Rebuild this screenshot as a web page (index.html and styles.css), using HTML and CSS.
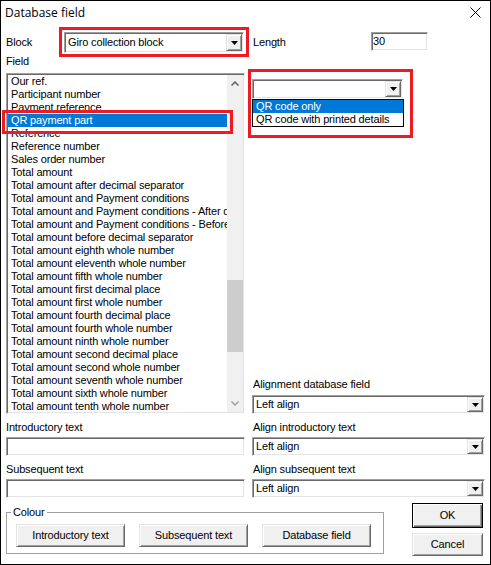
FILE: index.html
```html
<!DOCTYPE html>
<html lang="en">
<head>
    <meta charset="UTF-8">
    <title>Database field</title>
    <link rel="stylesheet" href="styles.css">
</head>
<body>
<div class="window">
    <div class="titlebar">
        <span class="title">Database field</span>
        <svg class="close" width="11" height="11" viewBox="0 0 11 11"><path d="M0.5 0.5 L10.5 10.5 M10.5 0.5 L0.5 10.5" stroke="#000" stroke-width="1"/></svg>
    </div>

    <div class="form">
        <div class="grid row-top">
            <div class="cell">
                <span class="lbl lbl-block">Block</span>
                <div class="combo combo-block">
                    <span class="combo-text">Giro collection block</span>
                    <span class="drop-btn"><svg width="7" height="4" viewBox="0 0 7 4"><path d="M0 0h7l-3.5 4z" fill="#000"/></svg></span>
                </div>
            </div>
            <div class="cell">
                <span class="lbl lbl-length">Length</span>
                <div class="textbox textbox-length">30</div>
            </div>
        </div>

        <div class="lbl field-lbl">Field</div>

        <div class="grid row-main">
            <div class="listbox">
                <ul class="items">
                    <li>Our ref.</li>
                    <li>Participant number</li>
                    <li>Payment reference</li>
                    <li class="sel">QR payment part</li>
                    <li>Reference</li>
                    <li>Reference number</li>
                    <li>Sales order number</li>
                    <li>Total amount</li>
                    <li>Total amount after decimal separator</li>
                    <li>Total amount and Payment conditions</li>
                    <li>Total amount and Payment conditions - After decimal separator</li>
                    <li>Total amount and Payment conditions - Before decimal separator</li>
                    <li>Total amount before decimal separator</li>
                    <li>Total amount eighth whole number</li>
                    <li>Total amount eleventh whole number</li>
                    <li>Total amount fifth whole number</li>
                    <li>Total amount first decimal place</li>
                    <li>Total amount first whole number</li>
                    <li>Total amount fourth decimal place</li>
                    <li>Total amount fourth whole number</li>
                    <li>Total amount ninth whole number</li>
                    <li>Total amount second decimal place</li>
                    <li>Total amount second whole number</li>
                    <li>Total amount seventh whole number</li>
                    <li>Total amount sixth whole number</li>
                    <li>Total amount tenth whole number</li>
                </ul>
                <div class="vscroll">
                    <span class="sb-btn"><svg width="8" height="5" viewBox="0 0 8 5"><path d="M0.5 4.5 L4 1 L7.5 4.5" fill="none" stroke="#606060" stroke-width="1.5"/></svg></span>
                    <span class="thumb"></span>
                    <span class="sb-btn sb-down"><svg width="8" height="5" viewBox="0 0 8 5"><path d="M0.5 0.5 L4 4 L7.5 0.5" fill="none" stroke="#a0a0a0" stroke-width="1.5"/></svg></span>
                </div>
            </div>

            <div class="side">
                <div class="qr">
                    <div class="combo combo-qr">
                        <span class="combo-text"></span>
                        <span class="drop-btn"><svg width="7" height="4" viewBox="0 0 7 4"><path d="M0 0h7l-3.5 4z" fill="#000"/></svg></span>
                    </div>
                    <ul class="droplist">
                        <li class="sel">QR code only</li>
                        <li>QR code with printed details</li>
                    </ul>
                </div>
                <div class="align-group">
                    <div class="lbl lbl-right">Alignment database field</div>
                    <div class="combo combo-wide">
                        <span class="combo-text">Left align</span>
                        <span class="drop-btn"><svg width="7" height="4" viewBox="0 0 7 4"><path d="M0 0h7l-3.5 4z" fill="#000"/></svg></span>
                    </div>
                </div>
            </div>
        </div>

        <div class="grid row-text">
            <div>
                <div class="lbl">Introductory text</div>
                <div class="textbox textbox-wide"></div>
            </div>
            <div>
                <div class="lbl lbl-right">Align introductory text</div>
                <div class="combo combo-wide">
                    <span class="combo-text">Left align</span>
                    <span class="drop-btn"><svg width="7" height="4" viewBox="0 0 7 4"><path d="M0 0h7l-3.5 4z" fill="#000"/></svg></span>
                </div>
            </div>
        </div>

        <div class="grid row-text">
            <div>
                <div class="lbl">Subsequent text</div>
                <div class="textbox textbox-wide"></div>
            </div>
            <div>
                <div class="lbl lbl-right">Align subsequent text</div>
                <div class="combo combo-wide">
                    <span class="combo-text">Left align</span>
                    <span class="drop-btn"><svg width="7" height="4" viewBox="0 0 7 4"><path d="M0 0h7l-3.5 4z" fill="#000"/></svg></span>
                </div>
            </div>
        </div>

        <div class="bottom">
            <fieldset class="colour">
                <legend>Colour</legend>
                <button class="btn btn-colour">Introductory text</button>
                <button class="btn btn-colour">Subsequent text</button>
                <button class="btn btn-colour">Database field</button>
            </fieldset>
            <div class="actions">
                <button class="btn btn-ok">OK</button>
                <button class="btn btn-cancel">Cancel</button>
            </div>
        </div>
    </div>

    <!-- red highlight marks drawn over the dialog -->
    <div class="mark mark-block"></div>
    <div class="mark mark-field"></div>
    <div class="mark mark-qr"></div>
</div>
</body>
</html>
```

FILE: styles.css
```css
* {
    box-sizing: border-box;
}
body {
    margin: 0;
    background: #fff;
    color: #000;
    font-family: "Liberation Sans", Arial, sans-serif;
    font-size: 11px;
    line-height: 13px;
    letter-spacing: -0.15px;
}
.window {
    position: relative;
    width: 491px;
    height: 565px;
    border: 1px solid #000;
    background: #fff;
    overflow: hidden;
}
.titlebar {
    height: 23px;
    display: flex;
    align-items: center;
    justify-content: space-between;
    padding: 0 9px 0 4px;
}
.title {
    font-family: "Open Sans", "Liberation Sans", sans-serif;
    font-size: 12px;
    letter-spacing: 0;
}
.close {
    display: block;
}
.form {
    padding: 0 5px;
}
.grid {
    display: grid;
    grid-template-columns: 239px 233px;
    column-gap: 7px;
}
.cell {
    display: flex;
    align-items: flex-start;
}
.lbl {
    white-space: nowrap;
}
.lbl-right {
    padding-left: 1px;
}
.row-top {
    margin-top: 8px;
}
.lbl-block {
    width: 58px;
    line-height: 21px;
}
.lbl-length {
    width: 119px;
    padding-left: 1px;
    line-height: 21px;
}

/* sunken 3d boxes */
.combo, .textbox, .listbox {
    border: 1px solid;
    border-color: #a0a0a0 #fff #fff #a0a0a0;
    box-shadow: inset 1px 1px 0 #696969, inset -1px -1px 0 #e3e3e3;
    padding: 1px;
    background: #fff;
}
.combo {
    display: flex;
}
.combo-text {
    flex: 1;
    padding-left: 2px;
    white-space: nowrap;
    overflow: hidden;
    display: flex;
    align-items: center;
}
.drop-btn {
    width: 16px;
    display: flex;
    align-items: center;
    justify-content: center;
    background: #f0f0f0;
    border: 1px solid;
    border-color: #e3e3e3 #696969 #696969 #e3e3e3;
    box-shadow: inset 1px 1px 0 #fff, inset -1px -1px 0 #a0a0a0;
}
.drop-btn svg {
    display: block;
}
.combo-block {
    width: 180px;
    height: 21px;
}
.textbox {
    height: 19px;
    line-height: 15px;
}
.textbox-length {
    width: 57px;
}
.textbox-wide {
    width: 100%;
    margin-top: 3px;
}
.field-lbl {
    margin-top: 2px;
}

/* field list */
.row-main {
    margin-top: 5px;
    height: 341px;
}
.listbox {
    display: flex;
    height: 341px;
}
.items {
    list-style: none;
    margin: 0;
    padding: 0;
    width: 219px;
    overflow: hidden;
}
.items li {
    height: 13px;
    padding-left: 3px;
    white-space: nowrap;
    overflow: hidden;
}
.items li.sel, .droplist li.sel {
    background: #0078d7;
    color: #fff;
}
.vscroll {
    width: 16px;
    background: #f0f0f0;
    display: flex;
    flex-direction: column;
}
.sb-btn {
    height: 17px;
    display: flex;
    align-items: center;
    justify-content: center;
}
.sb-down {
    margin-top: auto;
}
.thumb {
    margin-top: 188px;
    height: 72px;
    background: #cdcdcd;
}

/* right column */
.side {
    display: flex;
    flex-direction: column;
    justify-content: space-between;
}
.qr {
    margin-top: 6px;
}
.combo-qr {
    width: 151px;
    height: 20px;
}
.droplist {
    list-style: none;
    margin: 0;
    padding: 0;
    width: 152px;
    border: 1px solid #000;
    background: #fff;
}
.droplist li {
    height: 13px;
    padding-left: 3px;
    white-space: nowrap;
}
.combo-wide {
    width: 233px;
    height: 19px;
}
.align-group .lbl {
    margin-bottom: 4px;
}
.row-text {
    margin-top: 7px;
}
.row-text .combo-wide {
    margin-top: 3px;
}

/* bottom buttons */
.bottom {
    display: flex;
    align-items: flex-start;
    margin-top: 5px;
}
.colour {
    width: 378px;
    margin: 3px 0 0 0;
    padding: 5px 9px 6px;
    border: 1px solid #a0a0a0;
    display: flex;
    gap: 14px;
}
.colour legend {
    margin-left: -5px;
    padding: 0 2px;
    line-height: 13px;
}
.btn {
    font: inherit;
    letter-spacing: inherit;
    color: #000;
    background: #f0f0f0;
    border: 1px solid;
    border-color: #e3e3e3 #696969 #696969 #e3e3e3;
    box-shadow: inset 1px 1px 0 #fff, inset -1px -1px 0 #a0a0a0;
    padding: 0;
    margin: 0;
    text-align: center;
}
.btn-colour {
    width: 109px;
    height: 23px;
}
.actions {
    margin-left: 28px;
    display: flex;
    flex-direction: column;
    gap: 5px;
}
.btn-ok {
    width: 71px;
    height: 25px;
    border: 1px solid #000;
    box-shadow: inset 1px 1px 0 #fff, inset -1px -1px 0 #696969, inset -2px -2px 0 #a0a0a0;
}
.btn-cancel {
    width: 71px;
    height: 23px;
}

/* red highlight marks */
.mark {
    position: absolute;
    border: 3px solid #ed1c24;
}
.mark-block {
    left: 58px;
    top: 26px;
    width: 190px;
    height: 30px;
}
.mark-field {
    left: 1px;
    top: 109px;
    width: 231px;
    height: 24px;
}
.mark-qr {
    left: 247px;
    top: 68px;
    width: 165px;
    height: 69px;
}
```
